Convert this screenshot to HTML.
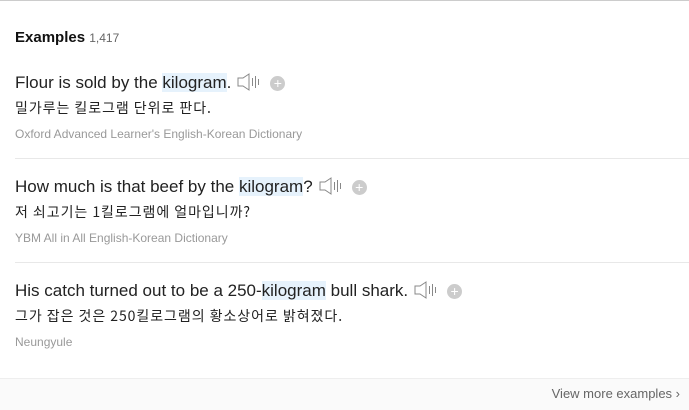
<!DOCTYPE html>
<html><head><meta charset="utf-8"><style>
body{margin:0;width:689px;height:409px;background:#fff;position:relative;overflow:hidden;font-family:"Liberation Sans","Noto Sans CJK KR",sans-serif;}
.top{position:absolute;left:0;top:0;width:689px;height:1px;background:#ccc}
.h{position:absolute;left:15px;top:29px;font-size:15px;font-weight:bold;color:#111}
.h span{font-weight:normal;font-size:12px;color:#666}
.s{position:absolute;left:15px;font-size:17px;color:#222;white-space:nowrap;line-height:20px}
.s b{font-weight:normal;background:#e6f2fc}
.k{position:absolute;left:15px;font-size:14px;letter-spacing:0.95px;color:#222;white-space:nowrap;font-family:"Noto Sans CJK KR","Liberation Sans",sans-serif;line-height:18px}
.src{position:absolute;left:15px;font-size:12px;color:#999;white-space:nowrap}
.sep{position:absolute;left:15px;right:0;height:1px;background:#e8e8e8}
.ic{display:inline-block;vertical-align:-3px;margin-left:6px}
.pl{display:inline-block;width:15px;height:15px;border-radius:50%;background:#ccc;color:#fff;font-size:14px;line-height:15px;text-align:center;vertical-align:0;margin-left:9px}
.foot{position:absolute;left:0;top:378px;width:689px;height:31px;background:#fafafa;border-top:1px solid #eee}
.foot span{position:absolute;right:9px;top:7px;font-size:13px;color:#666}
</style></head><body>
<div class="top"></div>
<div class="h">Examples <span>1,417</span></div>

<div class="s" style="top:73px">Flour is sold by the <b>kilogram</b>.<svg class="ic" width="24" height="18" viewBox="0 0 24 18"><path d="M1 5h5l6-4v16l-6-4H1z" fill="none" stroke="#888" stroke-width="1"/><path d="M15.5 5v8M18.5 3v12M21.5 6v6" stroke="#888" stroke-width="1"/></svg><span class="pl">+</span></div>
<div class="k" style="top:99px">밀가루는 킬로그램 단위로 판다.</div>
<div class="src" style="top:127px">Oxford Advanced Learner's English-Korean Dictionary</div>
<div class="sep" style="top:158px"></div>

<div class="s" style="top:177px">How much is that beef by the <b>kilogram</b>?<svg class="ic" width="24" height="18" viewBox="0 0 24 18"><path d="M1 5h5l6-4v16l-6-4H1z" fill="none" stroke="#888" stroke-width="1"/><path d="M15.5 5v8M18.5 3v12M21.5 6v6" stroke="#888" stroke-width="1"/></svg><span class="pl">+</span></div>
<div class="k" style="top:203px">저 쇠고기는 1킬로그램에 얼마입니까?</div>
<div class="src" style="top:231px">YBM All in All English-Korean Dictionary</div>
<div class="sep" style="top:262px"></div>

<div class="s" style="top:281px">His catch turned out to be a 250-<b>kilogram</b> bull shark.<svg class="ic" width="24" height="18" viewBox="0 0 24 18"><path d="M1 5h5l6-4v16l-6-4H1z" fill="none" stroke="#888" stroke-width="1"/><path d="M15.5 5v8M18.5 3v12M21.5 6v6" stroke="#888" stroke-width="1"/></svg><span class="pl">+</span></div>
<div class="k" style="top:307px">그가 잡은 것은 250킬로그램의 황소상어로 밝혀졌다.</div>
<div class="src" style="top:335px">Neungyule</div>

<div class="foot"><span>View more examples ›</span></div>
</body></html>
